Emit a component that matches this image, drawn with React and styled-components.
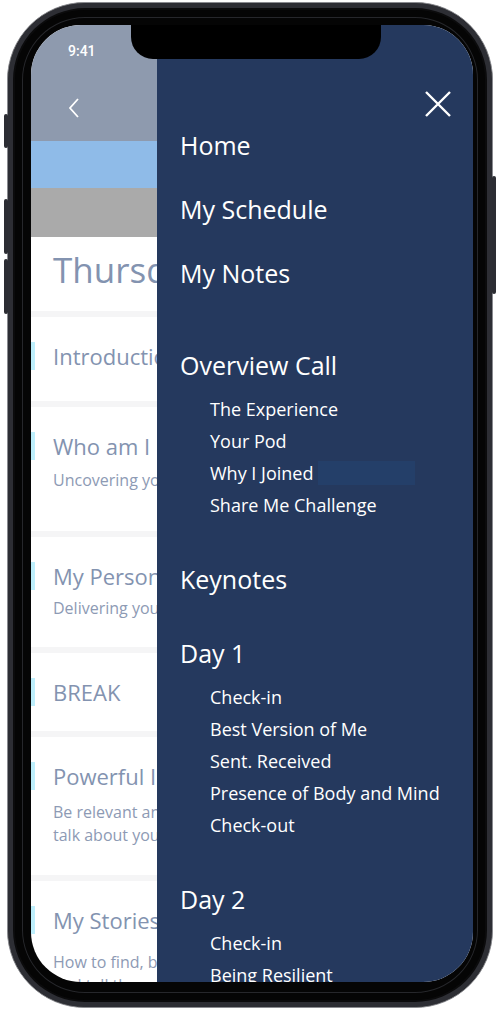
import React from 'react';
import styled, { createGlobalStyle } from 'styled-components';

const GlobalStyle = createGlobalStyle`
    html, body {
        margin:0;
        padding:0;
        background:#ffffff;
    }
    body {
        font-family:"Open Sans", "Noto Sans", sans-serif;
    }
`;

/* Phone */

const Stage = styled.div`
    width:500px;
    height:1013px;
    padding:2px 0 0 7px;
    box-sizing:border-box;
    overflow:hidden;
`;

const Phone = styled.div`
    position:relative;
    width:486px;
    height:1006px;
    box-sizing:border-box;
    padding:22px 21px 25px 23px;
    border-radius:78px;
    background:#050505;
    border:1px solid #8a8b90;
    box-shadow:
        inset 0 0 0 5px #2d2e34,
        inset 0 0 0 7px #0b0b0c,
        inset 0 0 0 14px #050505,
        inset 0 0 0 15px #26272b;
`;

const SideButton = styled.div`
    position:absolute;
    top:${p => p.top}px;
    height:${p => p.h}px;
    width:4px;
    background:#2c2d33;
    border-radius:2px;
    ${p => p.right ? 'right:-4px;' : 'left:-4px;'}
`;

const Screen = styled.div`
    position:relative;
    width:442px;
    height:957px;
    border-radius:50px;
    overflow:hidden;
    background:#ffffff;
`;

const Notch = styled.div`
    position:absolute;
    top:0;
    left:100px;
    width:250px;
    height:34px;
    background:#000;
    border-radius:0 0 22px 22px;
    z-index:5;
`;

/* Left page (dimmed behind the drawer) */

const Page = styled.div`
    display:flex;
    flex-direction:column;
    width:442px;
`;

const Header = styled.div`
    height:116px;
    box-sizing:border-box;
    padding:17px 0 0 37px;
    background:#8e9aae;
    display:flex;
    flex-direction:column;
`;

const Time = styled.span`
    font-family:Roboto, "Liberation Sans", sans-serif;
    font-size:14px;
    line-height:18px;
    font-weight:500;
    color:#ffffff;
`;

const Back = styled.svg`
    margin-top:38px;
    width:12px;
    height:20px;
`;

const Band = styled.div`
    height:${p => p.h}px;
    background:${p => p.color};
`;

const DayTitle = styled.div`
    height:74px;
    line-height:66px;
    padding-left:22px;
    font-size:35px;
    color:#8393b0;
    white-space:nowrap;
`;

const Card = styled.div`
    border-top:6px solid #f5f5f6;
    padding:24px 0 ${p => p.pb}px 0;
    display:flex;
    gap:18px;
    align-items:flex-start;
`;

const Accent = styled.div`
    flex:none;
    width:4px;
    height:28px;
    margin-top:1px;
    background:#bdeefb;
`;

const CardBody = styled.div`
    display:flex;
    flex-direction:column;
    gap:${p => p.gap}px;
    white-space:nowrap;
`;

const CardTitle = styled.div`
    font-size:22px;
    line-height:30px;
    color:#8393b0;
`;

const CardSub = styled.div`
    font-size:16px;
    line-height:23px;
    color:#8d9ab4;
`;

/* Drawer */

const Drawer = styled.nav`
    position:absolute;
    top:0;
    left:126px;
    right:0;
    bottom:0;
    background:#25395e;
    display:flex;
    flex-direction:column;
    color:#ffffff;
    z-index:2;
`;

const DrawerTop = styled.div`
    flex:none;
    height:104px;
    box-sizing:border-box;
    padding:66px 22px 0 0;
    display:flex;
    justify-content:flex-end;
    align-items:flex-start;
`;

const Close = styled.svg`
    width:26px;
    height:26px;
`;

const MenuBody = styled.div`
    flex:none;
    padding-left:23px;
    display:flex;
    flex-direction:column;
`;

const MainLinks = styled.div`
    display:flex;
    flex-direction:column;
    gap:32px;
`;

const MainLink = styled.div`
    font-size:25px;
    line-height:32px;
    white-space:nowrap;
`;

const Sections = styled.div`
    margin-top:60px;
    display:flex;
    flex-direction:column;
    gap:42px;
`;

const Section = styled.div`
    display:flex;
    flex-direction:column;
`;

const SubList = styled.div`
    margin-top:12px;
    padding-left:30px;
    display:flex;
    flex-direction:column;
`;

const SubLink = styled.div`
    font-size:18px;
    line-height:32px;
    white-space:nowrap;
    display:flex;
    align-items:center;
`;

const Glow = styled.span`
    display:inline-block;
    width:97px;
    height:24px;
    margin-left:5px;
    background:#243f69;
`;

const cards = [
    { title: 'Introduction to the Program', pb: 30 },
    { title: 'Who am I', sub: ['Uncovering your values and purpose'], gap: 8, pb: 39 },
    { title: 'My Personal Brand', sub: ['Delivering your message'], gap: 6, pb: 27 },
    { title: 'BREAK', pb: 24 },
    { title: 'Powerful Introductions', sub: ['Be relevant and engaging when you', 'talk about yourself with others'], gap: 10, pb: 28 },
    { title: 'My Stories', sub: ['How to find, build and tell', 'and tell them well'], gap: 16, pb: 30 },
];

const sections = [
    { title: 'Overview Call', items: ['The Experience', 'Your Pod', 'Why I Joined', 'Share Me Challenge'] },
    { title: 'Keynotes', items: [] },
    { title: 'Day 1', items: ['Check-in', 'Best Version of Me', 'Sent. Received', 'Presence of Body and Mind', 'Check-out'] },
    { title: 'Day 2', items: ['Check-in', 'Being Resilient'] },
];

export default function App() {
    return (
        <Stage>
            <GlobalStyle />
            <Phone>
                <SideButton top={111} h={34} />
                <SideButton top={196} h={55} />
                <SideButton top={256} h={55} />
                <SideButton right top={173} h={118} />
                <Screen>
                    <Notch />
                    <Page>
                        <Header>
                            <Time>9:41</Time>
                            <Back viewBox="0 0 12 20">
                                <polyline points="10,1 2,10 10,19" fill="none" stroke="#ffffff" strokeWidth="1.8" />
                            </Back>
                        </Header>
                        <Band h={47} color="#8fbbe8" />
                        <Band h={49} color="#aaaaaa" />
                        <DayTitle>Thursday, March 12</DayTitle>
                        {cards.map((c, i) => (
                            <Card key={i} pb={c.pb}>
                                <Accent />
                                <CardBody gap={c.gap || 0}>
                                    <CardTitle>{c.title}</CardTitle>
                                    {c.sub && <div>{c.sub.map((s, j) => <CardSub key={j}>{s}</CardSub>)}</div>}
                                </CardBody>
                            </Card>
                        ))}
                    </Page>
                    <Drawer>
                        <DrawerTop>
                            <Close viewBox="0 0 26 26">
                                <path d="M1 1 L25 25 M25 1 L1 25" stroke="#ffffff" strokeWidth="2.4" fill="none" />
                            </Close>
                        </DrawerTop>
                        <MenuBody>
                            <MainLinks>
                                <MainLink>Home</MainLink>
                                <MainLink>My Schedule</MainLink>
                                <MainLink>My Notes</MainLink>
                            </MainLinks>
                            <Sections>
                                {sections.map(s => (
                                    <Section key={s.title}>
                                        <MainLink>{s.title}</MainLink>
                                        {s.items.length > 0 && (
                                            <SubList>
                                                {s.items.map((it, k) => (
                                                    <SubLink key={k}>
                                                        {it}
                                                        {it === 'Why I Joined' && <Glow />}
                                                    </SubLink>
                                                ))}
                                            </SubList>
                                        )}
                                    </Section>
                                ))}
                            </Sections>
                        </MenuBody>
                    </Drawer>
                </Screen>
            </Phone>
        </Stage>
    );
}
